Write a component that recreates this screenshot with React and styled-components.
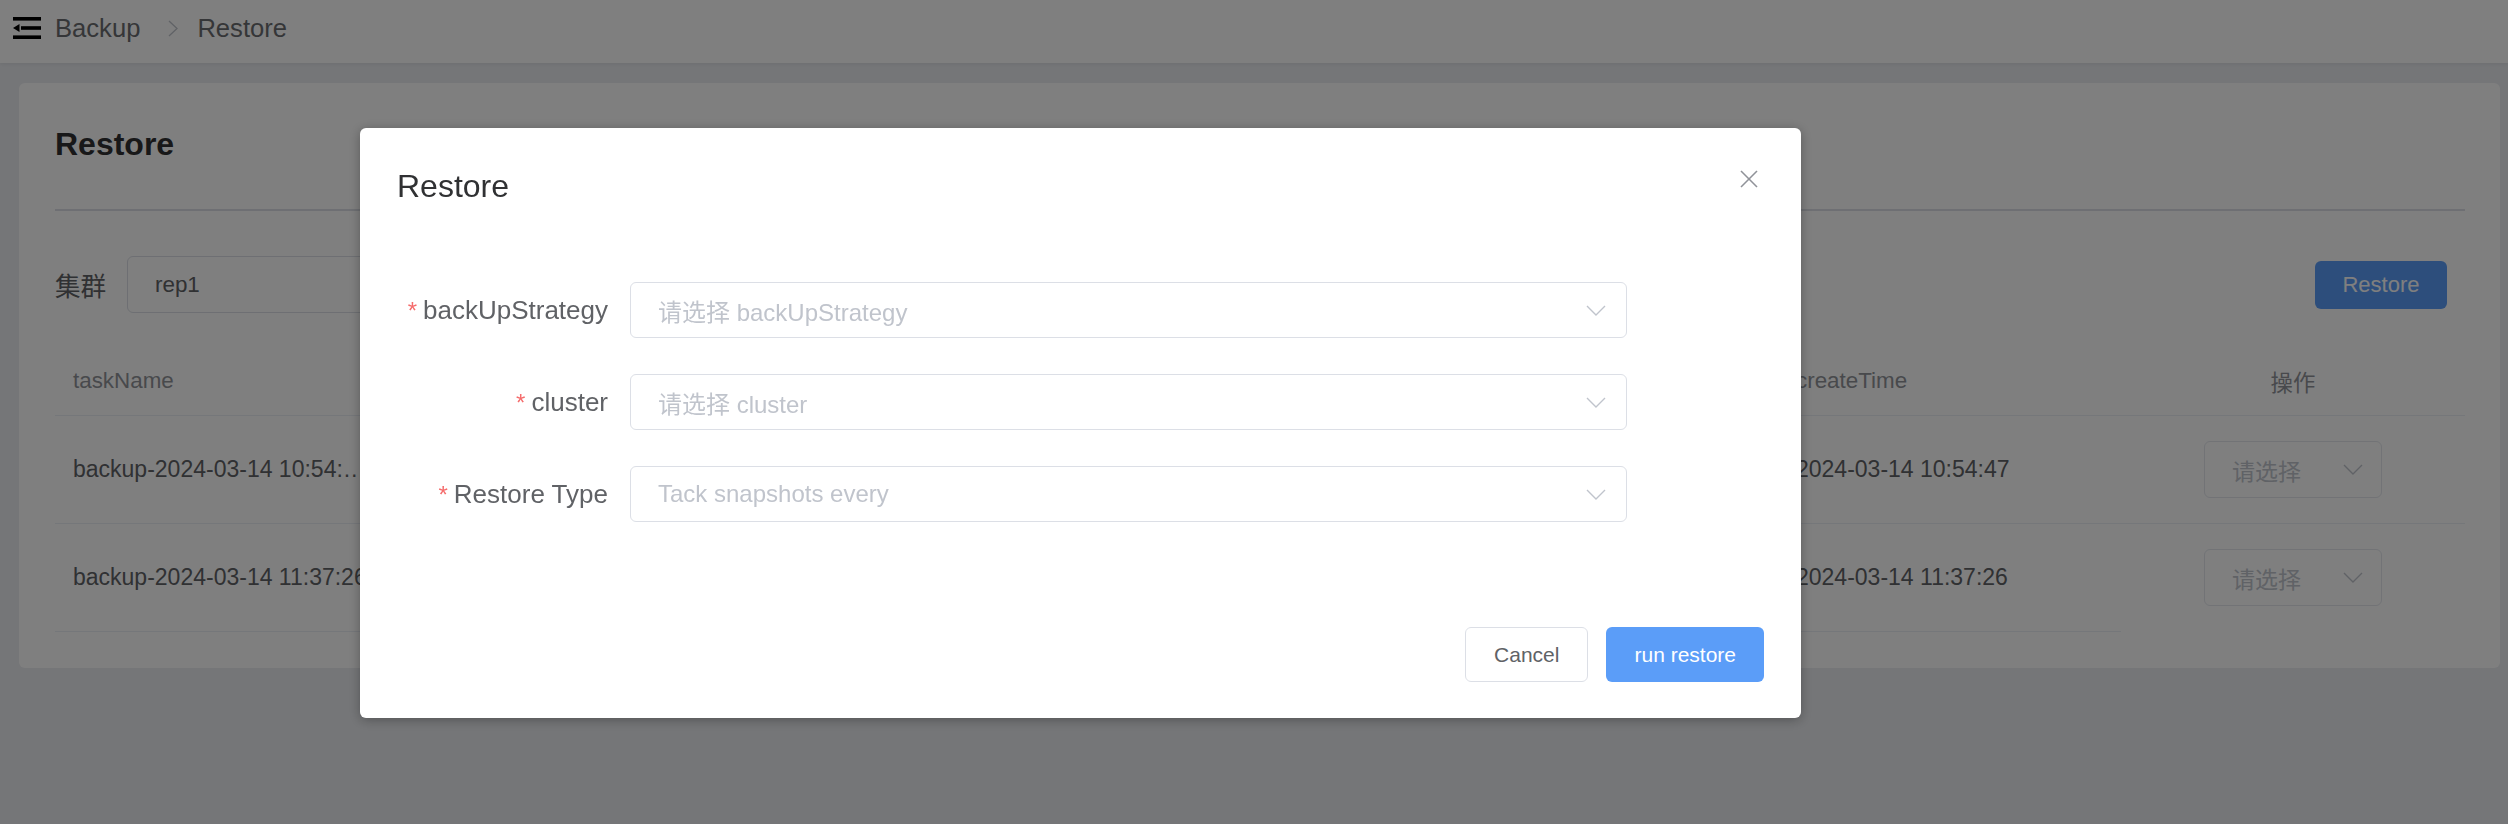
import React from 'react';
import styled, { createGlobalStyle } from 'styled-components';

const GlobalStyle = createGlobalStyle`
  html, body { margin: 0; padding: 0; }
  body {
    font-family: "Liberation Sans", "Noto Sans CJK SC", sans-serif;
    background: #ebedf1;
    width: 2508px;
    height: 824px;
    overflow: hidden;
  }
  * { box-sizing: border-box; }
`;

const Page = styled.div`
  min-height: 824px;
  display: flex;
  flex-direction: column;
`;

const TopBar = styled.header`
  height: 63px;
  background: #fff;
  display: flex;
  align-items: center;
  padding: 0 0 7px 13px;
  box-shadow: 0 1px 4px rgba(0, 21, 41, 0.08);
  font-size: 25.6px;
  color: #6b6d70;
`;

const Crumb = styled.span`
  margin-left: ${p => p.$first ? '14px' : '0'};
  color: #6b6d70;
`;

const CrumbSep = styled.svg`
  width: 10px;
  height: 17px;
  margin: 0 19px 0 28px;
`;

const Main = styled.main`
  padding: 20px 8px 0 19px;
`;

const Card = styled.section`
  background: #fff;
  border-radius: 6px;
  padding: 37px 35px 36px 36px;
`;

const CardTitle = styled.h2`
  margin: 0;
  font-size: 32px;
  line-height: 48px;
  font-weight: 700;
  color: #303133;
`;

const Divider = styled.div`
  height: 2px;
  background: #dcdfe6;
  margin-top: 41px;
`;

const FilterRow = styled.div`
  display: flex;
  align-items: center;
  margin-top: 45px;
  height: 57px;
`;

const FilterLabel = styled.span`
  width: 72px;
  font-size: 25.6px;
  color: #606266;
`;

const FilterSelect = styled.div`
  width: 380px;
  height: 57px;
  border: 1.6px solid #dcdfe6;
  border-radius: 6px;
  padding-left: 27px;
  display: flex;
  align-items: center;
  font-size: 22.4px;
  color: #606266;
`;

const PrimaryButton = styled.button`
  height: ${p => p.$h || 55}px;
  width: ${p => p.$w ? `${p.$w}px` : 'auto'};
  padding: 0 ${p => p.$px ?? 28}px;
  margin-left: ${p => p.$push ? 'auto' : '0'};
  margin-right: ${p => p.$mr || 0}px;
  background: #5b9df8;
  border: none;
  border-radius: 6px;
  color: #fff;
  font-family: inherit;
  font-size: ${p => p.$fs || 21}px;
`;

const Table = styled.div`
  margin-top: 34px;
  display: grid;
  grid-template-columns: 340px 1383px 343px 344px;
`;

const HeadCell = styled.div`
  height: 69px;
  display: flex;
  align-items: center;
  justify-content: ${p => p.$center ? 'center' : 'flex-start'};
  padding-left: ${p => p.$center ? 0 : 18}px;
  font-size: 22.4px;
  color: #909399;
  border-bottom: 1.6px solid #ebeef5;
`;

const BodyCell = styled.div`
  height: 108px;
  display: flex;
  align-items: center;
  justify-content: ${p => p.$center ? 'center' : 'flex-start'};
  padding: 0 ${p => p.$center ? 0 : 20}px 0 ${p => p.$center ? 0 : 18}px;
  font-size: 23px;
  color: #606266;
  border-bottom: 1.6px solid ${p => p.$noLine ? 'transparent' : '#ebeef5'};
  min-width: 0;
`;

const Ellipsis = styled.span`
  white-space: nowrap;
  overflow: hidden;
  text-overflow: ellipsis;
`;

const RowSelect = styled.div`
  width: 178px;
  height: 57px;
  border: 1.6px solid #e4e7ed;
  border-radius: 6px;
  padding: 0 18px 0 27px;
  display: flex;
  align-items: center;
  justify-content: space-between;
  font-size: 23px;
  color: #c0c4cc;
`;

const Chevron = styled.svg`
  width: 20px;
  height: 11px;
  flex: none;
`;

const Mask = styled.div`
  position: fixed;
  inset: 0;
  background: rgba(0, 0, 0, 0.5);
  padding: 128px 0 0 360px;
`;

const Dialog = styled.div`
  position: relative;
  width: 1441px;
  height: 590px;
  background: #fff;
  border-radius: 6px;
  box-shadow: 0 2px 12px rgba(0, 0, 0, 0.3);
  display: flex;
  flex-direction: column;
`;

const DialogHeader = styled.div`
  padding: 34px 37px 0;
`;

const DialogTitle = styled.h3`
  margin: 0;
  font-size: 32px;
  line-height: 48px;
  font-weight: 400;
  color: #303133;
`;

const CloseButton = styled.button`
  position: absolute;
  top: 42px;
  right: 43px;
  width: 18px;
  height: 18px;
  padding: 0;
  border: none;
  background: none;
  display: flex;
`;

const FormBody = styled.div`
  padding-top: 72px;
  display: flex;
  flex-direction: column;
  gap: 36px;
`;

const FormRow = styled.div`
  display: flex;
  align-items: center;
  height: 56px;
`;

const FormLabel = styled.label`
  width: 270px;
  padding-right: 22px;
  text-align: right;
  font-size: 26px;
  color: #606266;
`;

const Star = styled.span`
  color: #f56c6c;
  margin-right: 6px;
  font-size: 24px;
`;

const FormSelect = styled.div`
  width: 997px;
  height: 56px;
  border: 1.6px solid #dcdfe6;
  border-radius: 6px;
  padding: 0 20px 0 27px;
  display: flex;
  align-items: center;
  justify-content: space-between;
  font-size: 24px;
  color: #c0c4cc;
`;

const DialogFooter = styled.div`
  margin-top: auto;
  display: flex;
  justify-content: flex-end;
  gap: 18px;
  padding: 0 37px 36px;
`;

const DefaultButton = styled.button`
  height: 55px;
  padding: 0 28px;
  background: #fff;
  border: 1.6px solid #dcdfe6;
  border-radius: 6px;
  color: #606266;
  font-family: inherit;
  font-size: 21px;
`;

const ArrowDown = ({ color = '#c0c4cc' }) => (
  <Chevron viewBox="0 0 20 11">
    <polyline points="1,1 10,10 19,1" fill="none" stroke={color} strokeWidth="1.4" />
  </Chevron>
);

const FoldIcon = () => (
  <svg width="28" height="22" viewBox="0 0 28 22">
    <rect x="0" y="0" width="28" height="3.6" fill="#000" />
    <rect x="8" y="9.2" width="20" height="3.6" fill="#000" />
    <polygon points="0,11 6.5,7 6.5,15" fill="#000" />
    <rect x="0" y="18.4" width="28" height="3.6" fill="#000" />
  </svg>
);

const rows = [
  { name: 'backup-2024-03-14 10:54:47-incremental', time: '2024-03-14 10:54:47' },
  { name: 'backup-2024-03-14 11:37:26', time: '2024-03-14 11:37:26' },
];

const fields = [
  { label: 'backUpStrategy', placeholder: '请选择 backUpStrategy' },
  { label: 'cluster', placeholder: '请选择 cluster' },
  { label: 'Restore Type', placeholder: 'Tack snapshots every' },
];

export default function App() {
  return (
    <>
      <GlobalStyle />
      <Page>
        <TopBar>
          <FoldIcon />
          <Crumb $first>Backup</Crumb>
          <CrumbSep viewBox="0 0 10 17">
            <polyline points="1,1 9,8.5 1,16" fill="none" stroke="#c0c4cc" strokeWidth="1.3" />
          </CrumbSep>
          <Crumb>Restore</Crumb>
        </TopBar>
        <Main>
          <Card>
            <CardTitle>Restore</CardTitle>
            <Divider />
            <FilterRow>
              <FilterLabel>集群</FilterLabel>
              <FilterSelect>rep1</FilterSelect>
              <PrimaryButton $push $mr={18} $h={48} $px={0} $w={132} $fs={22}>Restore</PrimaryButton>
            </FilterRow>
            <Table>
              <HeadCell>taskName</HeadCell>
              <HeadCell>status</HeadCell>
              <HeadCell>createTime</HeadCell>
              <HeadCell $center>操作</HeadCell>
              {rows.map((r, i) => (
                <React.Fragment key={r.name}>
                  <BodyCell><Ellipsis>{r.name}</Ellipsis></BodyCell>
                  <BodyCell>success</BodyCell>
                  <BodyCell>{r.time}</BodyCell>
                  <BodyCell $center $noLine={i === rows.length - 1}>
                    <RowSelect>
                      <span>请选择</span>
                      <ArrowDown />
                    </RowSelect>
                  </BodyCell>
                </React.Fragment>
              ))}
            </Table>
          </Card>
        </Main>
      </Page>
      <Mask>
        <Dialog>
          <DialogHeader>
            <DialogTitle>Restore</DialogTitle>
          </DialogHeader>
          <CloseButton aria-label="close">
            <svg width="18" height="18" viewBox="0 0 18 18">
              <line x1="1" y1="1" x2="17" y2="17" stroke="#909399" strokeWidth="1.6" />
              <line x1="17" y1="1" x2="1" y2="17" stroke="#909399" strokeWidth="1.6" />
            </svg>
          </CloseButton>
          <FormBody>
            {fields.map(f => (
              <FormRow key={f.label}>
                <FormLabel><Star>*</Star>{f.label}</FormLabel>
                <FormSelect>
                  <span>{f.placeholder}</span>
                  <ArrowDown />
                </FormSelect>
              </FormRow>
            ))}
          </FormBody>
          <DialogFooter>
            <DefaultButton>Cancel</DefaultButton>
            <PrimaryButton>run restore</PrimaryButton>
          </DialogFooter>
        </Dialog>
      </Mask>
    </>
  );
}
